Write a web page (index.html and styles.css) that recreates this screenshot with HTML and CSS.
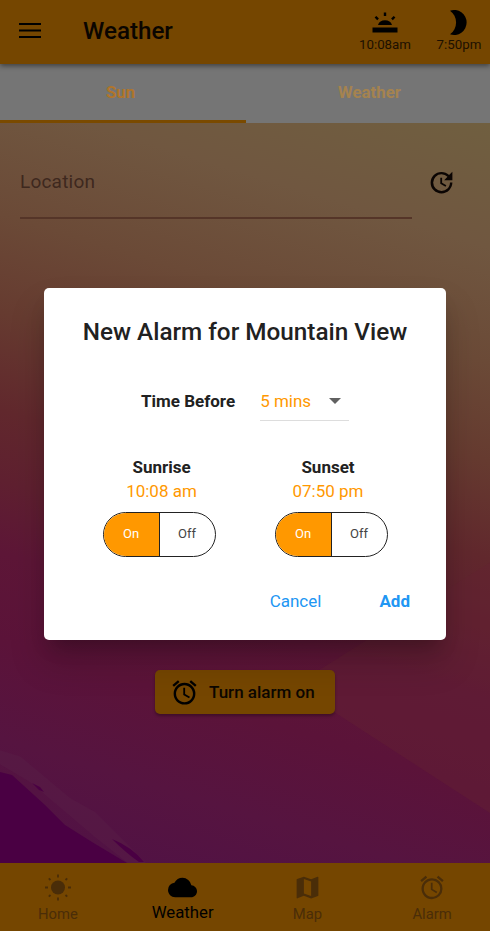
FILE: index.html
```html
<!DOCTYPE html>
<html lang="en">
<head>
<meta charset="utf-8">
<title>Weather</title>
<link rel="stylesheet" href="styles.css">
</head>
<body>
<svg class="defs" width="0" height="0" aria-hidden="true">
  <symbol id="alarm" viewBox="0 0 24 24"><path d="M22 5.72l-4.6-3.86-1.29 1.53 4.6 3.86L22 5.72zM7.88 3.39L6.6 1.86 2 5.71l1.29 1.53 4.59-3.85zM12.5 8H11v6l4.75 2.85.75-1.23-4-2.37V8zM12 4c-4.97 0-9 4.03-9 9s4.02 9 9 9a9 9 0 1 0 0-18zm0 16c-3.87 0-7-3.13-7-7s3.13-7 7-7 7 3.13 7 7-3.13 7-7 7z"/></symbol>
</svg>
<div class="app">
  <header class="bar">
    <svg class="menu" viewBox="0 0 22 16"><path d="M0 0h22v2H0zM0 6.500h22v2H0zM0 13h22v2H0z"/></svg>
    <h1 class="title">Weather</h1>
    <div class="time sunrise">
      <svg width="26" height="26" viewBox="0 0 26 26"><path d="M.5 17.500h25v5H.5zM6 15a7.300 6.500 0 0 1 14 0zM11.800 2.500h2.400V6h-2.400zM2.600 7.600l1.700-1.700 2.600 2.600-1.700 1.700zM23.400 7.600l-1.700-1.700-2.600 2.600 1.700 1.700z"/></svg>
      <span>10:08am</span>
    </div>
    <div class="time sunset">
      <svg width="26" height="26" viewBox="0 0 26 26"><path d="M4 .7A12.500 12.500 0 1 1 4 24.300A14.500 14.500 0 0 0 4 .7z"/></svg>
      <span>7:50pm</span>
    </div>
  </header>
  <nav class="tabs">
    <a class="tab active">Sun</a>
    <a class="tab">Weather</a>
  </nav>
  <main class="content">
    <svg class="paint" viewBox="0 0 490 741" preserveAspectRatio="none">
      <path class="stroke-light" d="M490 440L300 560l10 14 180 117z"/>
      <path class="stroke-edge" d="M0 628L20 634 70 676 95 690 146 741H128L95 715 68 692 30 660 0 642z"/>
      <path class="corner" d="M0 656V650L12 653 45 683 65 703 92 720 127 741H0z"/>
      <path class="corner" d="M112 717Q132 725 144 740H139Q126 731 112 717zM32 661l8 4 4 5-5-2z"/>
    </svg>
    <div class="search">
      <div class="field">Location</div>
      <svg class="update" viewBox="0 0 24 24"><path d="M21 10.120h-6.780l2.740-2.820a6.900 6.900 0 0 0-9.800-.1 6.875 6.875 0 0 0 0 9.790 7.020 7.020 0 0 0 9.790 0C18.320 15.650 19 14.080 19 12.100h2c0 1.980-.88 4.550-2.640 6.290a9.050 9.050 0 0 1-12.720 0 8.840 8.840 0 0 1-.02-12.570 8.987 8.987 0 0 1 12.650 0L21 3v7.120zM12.500 8v4.250l3.500 2.080-.72 1.210L11 13V8h1.500z"/></svg>
    </div>
    <button class="turn"><svg viewBox="0 0 24 24"><use href="#alarm"/></svg>Turn alarm on</button>
  </main>
  <footer class="bottom">
    <div class="items">
      <a class="item"><svg width="28" height="28" viewBox="0 0 28 28"><circle cx="14" cy="14" r="7"/><path class="rays" d="M14 1v3M14 24v3M1 14h3M24 14h3M4.800 4.800l1.700 1.700M21.500 21.500l1.700 1.700M4.800 23.200l1.700-1.700M21.500 6.500l1.700-1.700"/></svg><span>Home</span></a>
      <a class="item current"><svg width="29" height="29" viewBox="0 0 24 24"><path d="M19.350 10.040A7.490 7.490 0 0 0 12 4C9.110 4 6.600 5.640 5.350 8.040A5.994 5.994 0 0 0 0 14c0 3.310 2.690 6 6 6h13c2.760 0 5-2.240 5-5 0-2.640-2.050-4.780-4.650-4.960z"/></svg><span>Weather</span></a>
      <a class="item"><svg width="29" height="29" viewBox="0 0 24 24"><path d="M20.500 3l-.16.030L15 5.100 9 3 3.360 4.900c-.21.070-.36.250-.36.480V20.500c0 .28.220.5.500.5l.16-.03L9 18.900l6 2.100 5.640-1.900c.21-.07.360-.25.360-.48V3.500c0-.28-.22-.5-.5-.5zM15 19l-6-2.110V5l6 2.110V19z"/></svg><span>Map</span></a>
      <a class="item"><svg width="28" height="28" viewBox="0 0 24 24"><use href="#alarm"/></svg><span>Alarm</span></a>
    </div>
  </footer>
</div>
<section class="dialog" role="dialog">
  <h2 class="heading">New Alarm for Mountain View</h2>
  <div class="before">
    <b>Time Before</b>
    <div class="select"><span>5 mins</span><i class="caret"></i></div>
  </div>
  <div class="events">
    <div class="event rise">
      <b>Sunrise</b><span class="at">10:08 am</span>
      <div class="toggle"><span class="on">On</span><span class="off">Off</span></div>
    </div>
    <div class="event set">
      <b>Sunset</b><span class="at">07:50 pm</span>
      <div class="toggle"><span class="on">On</span><span class="off">Off</span></div>
    </div>
  </div>
  <div class="actions"><a>Cancel</a><a class="add">Add</a></div>
</section>
</body>
</html>
```
FILE: styles.css
```css
* { box-sizing: border-box; }
body { margin: 0; font-family: Roboto, sans-serif; color: #212121; }
.defs { position: absolute; }
.app { height: 931px; display: flex; flex-direction: column; overflow: hidden; color: #0a0500; }
.bar { height: 64px; flex: none; display: flex; background: #754600; box-shadow: 0 2px 5px rgba(0,0,0,.45); z-index: 2; }
.menu { width: 22px; height: 16px; margin: 23px 0 0 19px; }
.title { margin: 16px 0 0 42px; font-size: 24.2px; line-height: 30px; font-weight: 500; flex: 1; }
.time { display: flex; flex-direction: column; align-items: center; font-size: 13.3px; line-height: 16px; padding-top: 10px; color: #1c1000; }
.time svg { fill: #000; }
.time span { margin-top: 1px; }
.sunrise { width: 54px; margin-right: 24px; }
.sunset { width: 46px; margin-right: 8px; }
.tabs { height: 59px; flex: none; display: flex; background: #757575; z-index: 1; }
.tab { flex: 1; text-align: center; font-size: 16.8px; line-height: 20px; font-weight: 700; padding: 18px 0 0 3px; color: #a5834f; }
.tab.active { color: #b0752a; border-bottom: 3px solid #7a4a00; padding: 18px 5px 0 0; }
.content { flex: 1; position: relative; background: linear-gradient(197deg, #705f40 0%, #705740 14%, #6b4a37 27%, #663b30 38%, #61282d 49%, #5f2030 57%, #5d1637 65%, #5b1339 75%, #561440 86%, #4f1146 100%); }
.paint { position: absolute; width: 100%; height: 100%; }
.stroke-light { fill: #652333; opacity: .4; }
.stroke-edge { fill: #592047; opacity: .45; }
.corner { fill: #4a0043; }
.search { position: relative; display: flex; padding: 0 20px; }
.field { width: 392px; height: 96px; padding-top: 47px; font-size: 19px; line-height: 24px; letter-spacing: .2px; color: #3e281e; border-bottom: 2px solid #553528; }
.update { width: 29px; height: 29px; margin: 45px 0 0 15px; fill: #0b0503; }
.turn { position: relative; display: flex; align-items: center; width: 180px; height: 44px; margin: 451px auto 0 155px; padding: 0 0 0 15px; gap: 10px; border: 0; border-radius: 5px; background: #754600; color: #0c0700; font: 500 17px Roboto, sans-serif; box-shadow: 0 2px 3px rgba(0,0,0,.3); }
.turn svg { width: 29px; height: 29px; }
.bottom { height: 68px; flex: none; background: #754600; }
.items { display: flex; margin: 0 -4.5px; }
.item { flex: 1 1 0; display: flex; flex-direction: column; align-items: center; padding-top: 10px; font-size: 14.8px; line-height: 18px; color: #4a2d08; fill: #4a2d08; }
.item svg { height: 29px; }
.item span { margin-top: 3px; }
.rays { stroke: #4a2d08; stroke-width: 1.8; }
.current { color: #000; fill: #000; font-size: 16.8px; }
.current span { margin-top: 1px; }
.dialog { position: absolute; left: 44px; top: 288px; width: 402px; height: 352px; border-radius: 5px; background: #fff; box-shadow: 0 12px 18px -8px rgba(0,0,0,.25), 0 22px 34px 2px rgba(0,0,0,.15); }
.heading { margin: 28px 0 0; text-align: center; font-size: 24.3px; line-height: 32px; font-weight: 500; white-space: nowrap; }
.before { display: flex; margin: 32px 0 0 97px; font-size: 17px; line-height: 42px; }
.select { display: flex; align-items: center; width: 89px; height: 41px; padding-top: 1px; margin-left: 25px; color: #ff9800; border-bottom: 1px solid #ddd; }
.caret { border: 6px solid transparent; border-top-color: #616161; border-bottom: 0; margin-left: 18px; }
.events { display: flex; margin: 33px 0 0 58px; gap: 58px; }
.event { width: 114px; display: flex; flex-direction: column; align-items: center; font-size: 17px; line-height: 24px; }
.rise > b, .rise > .at { margin-left: 5px; }
.set > b, .set > .at { margin-right: 6px; }
.at { color: #ff9800; }
.toggle { display: flex; width: 113px; height: 45px; margin-top: 9px; border: 1px solid #222; border-radius: 23px; overflow: hidden; font-size: 13px; line-height: 42px; text-align: center; }
.toggle span { flex: 1; }
.on { background: #ff9800; color: #fff; border-right: 1px solid #222; }
.off { color: #444; }
.actions { display: flex; justify-content: flex-end; gap: 58px; margin: 32px 36px 0 0; font-size: 17px; line-height: 24px; color: #2196f3; }
.add { font-weight: 700; }
```
